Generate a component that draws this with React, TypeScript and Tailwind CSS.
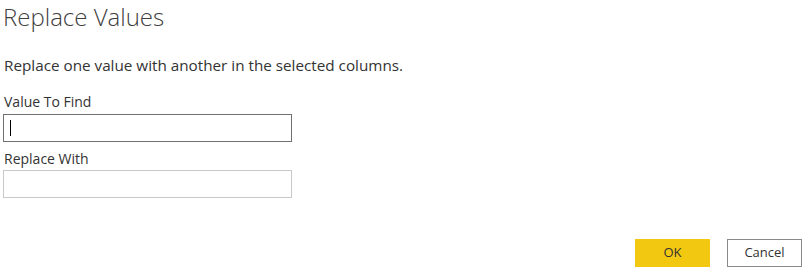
import React from "react";

const App = () => {
  return (
    <div
      className="w-[806px] h-[276px] bg-white flex flex-col text-[#333333]"
      style={{ fontFamily: '"Open Sans", "Noto Sans", sans-serif' }}
    >
      {/* Header */}
      <h1 className="ml-[3px] mt-[1px] text-[24px] leading-[32px] font-light text-[#404040]">
        Replace Values
      </h1>
      <p className="ml-[4px] mt-[22px] text-[15.25px] leading-[20px]">
        Replace one value with another in the selected columns.
      </p>

      {/* Fields */}
      <div className="ml-[3px] mt-[18px] flex flex-col">
        <label className="ml-[1px] text-[14px] leading-[18px]">Value To Find</label>
        <div className="mt-[3px] w-[289px] h-[28px] border border-[#707070] flex items-center pl-[6px]">
          <div className="w-px h-[16px] bg-black" />
        </div>
        <label className="ml-[1px] mt-[8px] text-[14px] leading-[18px]">Replace With</label>
        <div className="mt-[2px] w-[289px] h-[28px] border border-[#c8c8c8]" />
      </div>

      {/* Actions */}
      <div className="mt-auto mb-[9px] mr-[4px] flex justify-end gap-[17px]">
        <button className="w-[75px] h-[28px] bg-[#f2c811] text-[13px] text-[#333333]">
          OK
        </button>
        <button className="w-[75px] h-[28px] bg-white border border-[#8a8a8a] text-[13px] text-[#333333]">
          Cancel
        </button>
      </div>
    </div>
  );
};

export default App;
